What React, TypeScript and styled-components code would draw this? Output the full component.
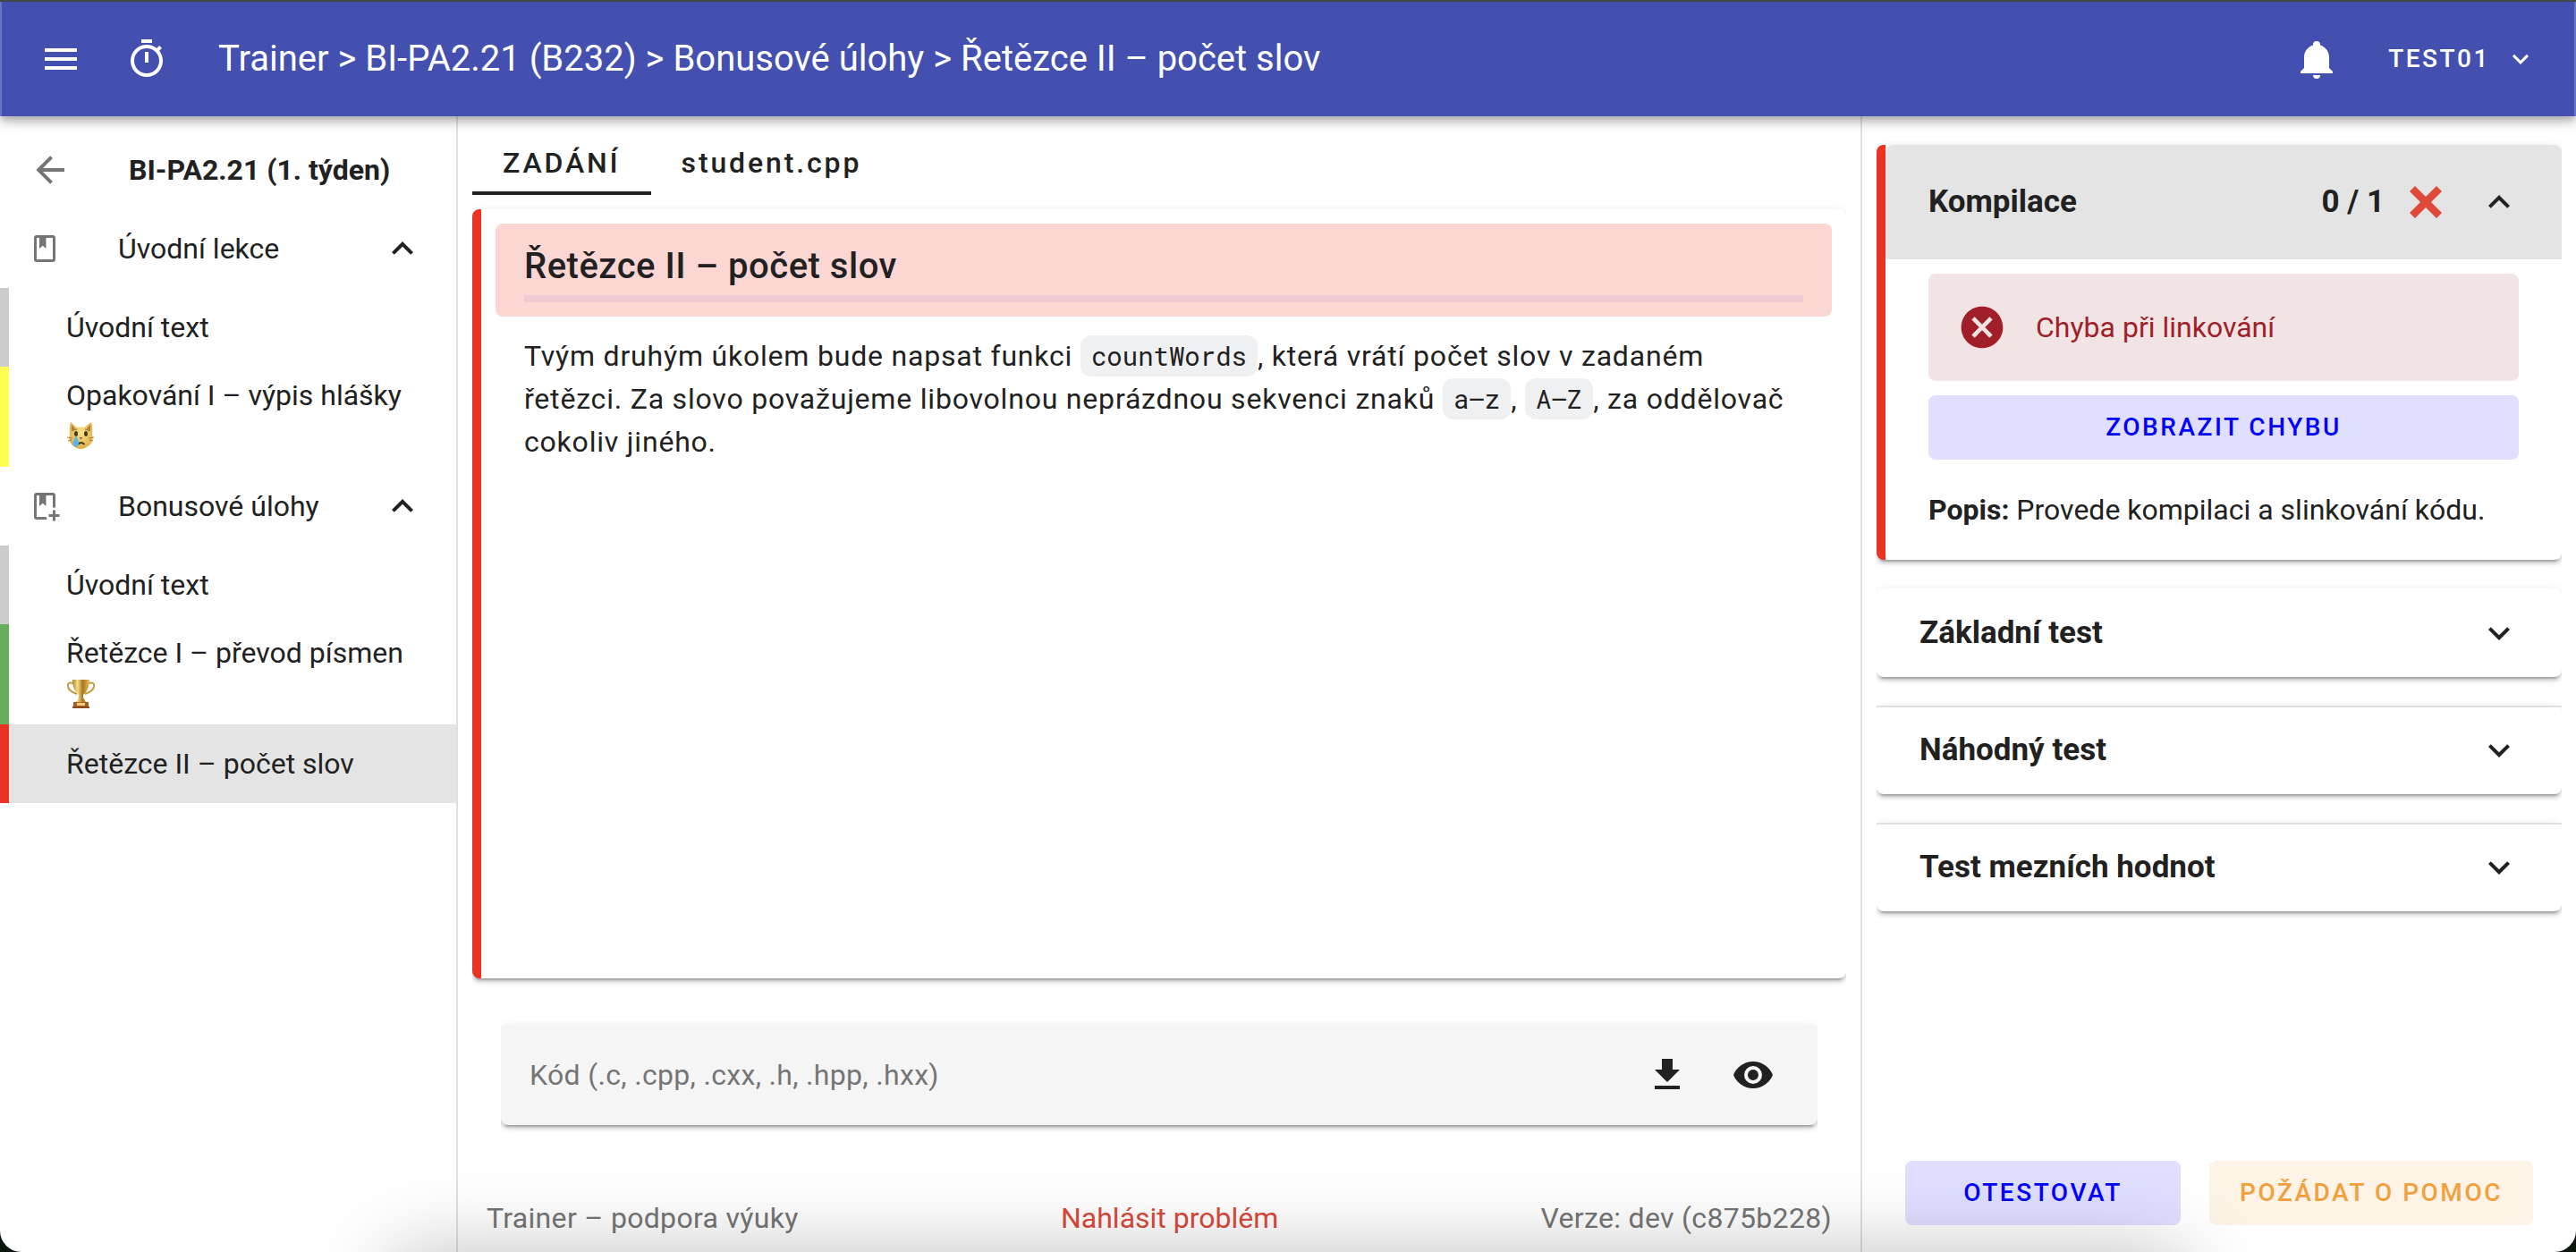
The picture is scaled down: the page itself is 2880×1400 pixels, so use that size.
import React from "react";
import styled, { createGlobalStyle } from "styled-components";

const ink = "#212121";
const muted = "#757575";
const line = "#e0e0e0";
const danger = "#eb3324";
const elevation =
  "0 6px 2px -4px rgba(0,0,0,.2), 0 4px 4px 0 rgba(0,0,0,.14), 0 2px 10px 0 rgba(0,0,0,.12)";

const GlobalStyle = createGlobalStyle`
  *, *::before, *::after { box-sizing: border-box; }
  html, body { margin: 0; background: #0c160d; }
  body {
    font-family: Roboto, "Noto Sans", sans-serif;
    font-size: 32px;
    line-height: 48px;
    color: ${ink};
    -webkit-font-smoothing: antialiased;
  }
  h1, h2, h3, p, ul { margin: 0; padding: 0; font-size: inherit; font-weight: inherit; }
  ul { list-style: none; }
  button { font: inherit; color: inherit; background: none; border: 0; padding: 0; margin: 0; text-align: left; cursor: pointer; }
  a { color: inherit; text-decoration: none; }
  svg { display: block; flex: none; }
`;

const paths = {
  menu: "M3,6H21V8H3V6M3,11H21V13H3V11M3,16H21V18H3V16Z",
  timer:
    "M12,20A7,7 0 0,1 5,13A7,7 0 0,1 12,6A7,7 0 0,1 19,13A7,7 0 0,1 12,20M19.03,7.39L20.45,5.97C20,5.46 19.55,5 19.04,4.56L17.62,6C16.07,4.74 14.12,4 12,4A9,9 0 0,0 3,13A9,9 0 0,0 12,22C17,22 21,17.97 21,13C21,10.88 20.26,8.93 19.03,7.39M11,14H13V8H11M15,1H9V3H15V1Z",
  bell:
    "M21,19V20H3V19L5,17V11C5,7.9 7.03,5.17 10,4.29C10,4.19 10,4.1 10,4A2,2 0 0,1 12,2A2,2 0 0,1 14,4C14,4.1 14,4.19 14,4.29C16.97,5.17 19,7.9 19,11V17L21,19M14,21A2,2 0 0,1 12,23A2,2 0 0,1 10,21H14Z",
  down: "M7.41,8.58L12,13.17L16.59,8.58L18,10L12,16L6,10L7.41,8.58Z",
  up: "M7.41,15.41L12,10.83L16.59,15.41L18,14L12,8L6,14L7.41,15.41Z",
  back: "M20,11V13H8L13.5,18.5L12.08,19.92L4.16,12L12.08,4.08L13.5,5.5L8,11H20Z",
  book:
    "M18,2A2,2 0 0,1 20,4V20A2,2 0 0,1 18,22H6A2,2 0 0,1 4,20V4A2,2 0 0,1 6,2H18M18,4H13V12L10.5,9.75L8,12V4H6V20H18V4Z",
  bookPlus:
    "M13.09,20H6V4H8V12L10.5,9.75L13,12V4H18V13.09C18.33,13.04 18.66,13 19,13C19.34,13 19.67,13.04 20,13.09V4A2,2 0 0,0 18,2H6A2,2 0 0,0 4,4V20A2,2 0 0,0 6,22H13.81C13.46,21.39 13.21,20.72 13.09,20M20,15H18V18H15V20H18V23H20V20H23V18H20V15Z",
  download: "M5,20H19V18H5M19,9H15V3H9V9H5L12,16L19,9Z",
  eye:
    "M12,9A3,3 0 0,0 9,12A3,3 0 0,0 12,15A3,3 0 0,0 15,12A3,3 0 0,0 12,9M12,17A5,5 0 0,1 7,12A5,5 0 0,1 12,7A5,5 0 0,1 17,12A5,5 0 0,1 12,17M12,4.5C7,4.5 2.73,7.61 1,12C2.73,16.39 7,19.5 12,19.5C17,19.5 21.27,16.39 23,12C21.27,7.61 17,4.5 12,4.5Z",
  error:
    "M12,2C17.53,2 22,6.47 22,12C22,17.53 17.53,22 12,22C6.47,22 2,17.53 2,12C2,6.47 6.47,2 12,2M15.59,7L12,10.59L8.41,7L7,8.41L10.59,12L7,15.59L8.41,17L12,13.41L15.59,17L17,15.59L13.41,12L17,8.41L15.59,7Z",
};

const Icon = ({ name, size = 48 }: { name: keyof typeof paths; size?: number }) => (
  <svg width={size} height={size} viewBox="0 0 24 24" fill="currentColor" aria-hidden="true">
    <path d={paths[name]} />
  </svg>
);

const CryingCat = () => (
  <svg width="32" height="32" viewBox="0 0 32 32" role="img" aria-label="Plačící kočka">
    <defs>
      <radialGradient id="fur" cx="50%" cy="40%" r="60%">
        <stop offset="0" stopColor="#fbe58a" />
        <stop offset="1" stopColor="#dcae48" />
      </radialGradient>
    </defs>
    <path d="M5 0 L12 6 Q16 5 20 6 L28 0 Q30 8 29 14 Q31 20 27 25 Q21 30 16.500 30 Q11 30 6 25 Q2 20 4 14 Q3 8 5 0Z" fill="url(#fur)" />
    <path d="M6 3 L10 7 L6 10Z M27 3 L23 7 L27 10Z" fill="#b9783a" />
    <ellipse cx="11" cy="13" rx="2" ry="3" fill="#4b3a1c" />
    <ellipse cx="22" cy="13" rx="2" ry="3" fill="#4b3a1c" />
    <path d="M7 10 Q9 8 12 8 M26 10 Q24 8 21 8" fill="none" stroke="#8a6424" strokeWidth="1" />
    <path d="M14.500 17h4l-2 2.500z" fill="#a05a48" />
    <path d="M13 25 Q16.500 21 20.500 25" fill="none" stroke="#4b3a1c" strokeWidth="2" />
    <path d="M1 17l6 1M2 21l4-1M31 17l-6 1M30 21l-4-1" stroke="#a8803a" strokeWidth="1" />
    <path d="M11 15 Q15 23 13.500 26 Q11 29 8 26 Q6.500 23 11 15Z" fill="#5bb5ee" />
  </svg>
);

const Trophy = () => (
  <svg width="32" height="32" viewBox="0 0 32 32" role="img" aria-label="Pohár">
    <defs>
      <linearGradient id="gold" x1="0" x2="1">
        <stop offset="0" stopColor="#b08020" />
        <stop offset=".3" stopColor="#f7e08c" />
        <stop offset=".6" stopColor="#a9771d" />
        <stop offset="1" stopColor="#e6bd58" />
      </linearGradient>
    </defs>
    <path d="M8 4 Q1 2 2 8 Q3 13 12 16 M25 4 Q32 2 31 8 Q30 13 21 16" fill="none" stroke="#c39a40" strokeWidth="2" />
    <path d="M7 0h19q0 12-7 17v3l3 5h-11l3-5v-3Q7 12 7 0z" fill="url(#gold)" />
    <path d="M8 25h17v5H8z" fill="#a65f26" />
    <path d="M12 26h9v3h-9z" fill="#f0cf7a" />
    <path d="M7 30h19v2H7z" fill="#8a4a1e" />
  </svg>
);

const CrossMark = () => (
  <svg width="36" height="36" viewBox="0 0 36 36" role="img" aria-label="Neúspěch">
    <path d="M6 0L18 12L30 0L36 6L24 18L36 30L30 36L18 24L6 36L0 30L12 18L0 6Z" fill="#e0483a" />
  </svg>
);

const Window = styled.div`
  position: relative;
  display: flex;
  flex-direction: column;
  height: 100vh;
  overflow: hidden;
  border-top: 2px solid #444746;
  border-radius: 0 0 24px 24px;
  background: #fff;
`;

const DockShade = styled.div`
  position: absolute;
  left: 15%;
  right: 15%;
  top: 100%;
  height: 200px;
  border-radius: 40px;
  box-shadow: 0 0 90px rgba(0, 0, 0, 0.25);
  pointer-events: none;
`;

const AppBar = styled.header`
  position: relative;
  z-index: 2;
  display: flex;
  align-items: center;
  flex: none;
  height: 128px;
  padding: 0 42px;
  border: solid #6a73c0;
  border-width: 0 2px;
  background: #4450b0;
  color: #fff;
  box-shadow: 0 4px 8px -2px rgba(0, 0, 0, 0.2), 0 8px 10px rgba(0, 0, 0, 0.14), 0 2px 20px rgba(0, 0, 0, 0.12);
`;

const BarButton = styled.button`
  display: flex;
  align-items: center;
  margin-right: 48px;
`;

const Crumbs = styled.h1`
  flex: 1;
  padding-left: 8px;
  font-size: 40px;
`;

const UserButton = styled.button`
  display: flex;
  align-items: center;
  gap: 16px;
  padding-left: 8px;
  font-size: 28px;
  font-weight: 500;
  letter-spacing: 0.09em;
`;

const Body = styled.div`
  display: flex;
  flex: 1;
  min-height: 0;
`;

const Sidebar = styled.nav`
  flex: none;
  width: 512px;
  padding-top: 16px;
  border-right: 2px solid ${line};
`;

const SideHead = styled.div`
  display: flex;
  align-items: center;
  gap: 64px;
  height: 88px;
  padding-left: 32px;
  font-weight: 700;

  a { color: ${muted}; }
`;

const GroupHead = styled.button`
  display: flex;
  align-items: center;
  width: 100%;
  height: 88px;
  padding: 0 36px 0 32px;

  svg:first-child { color: ${muted}; }
  span { flex: 1; padding-left: 64px; }
`;

const Lesson = styled.a<{ $mark: string; $active?: boolean }>`
  display: flex;
  align-items: center;
  min-height: 88px;
  padding: 8px 32px 8px 64px;
  border-left: 10px solid ${(p) => p.$mark};
  background: ${(p) => (p.$active ? "#e4e4e4" : "transparent")};

  svg { margin: 6px 0 10px; }
`;

const Main = styled.main`
  display: flex;
  flex: 1;
  flex-direction: column;
  min-width: 0;
  padding: 16px 16px 0;
`;

const Tabs = styled.div`
  display: flex;
  margin-bottom: 16px;
`;

const Tab = styled.button<{ $active?: boolean }>`
  height: 72px;
  padding: 4px 34px 0;
  border-bottom: 4px solid ${(p) => (p.$active ? ink : "transparent")};
  font-weight: 500;
  letter-spacing: 0.09em;
`;

const Card = styled.article`
  flex: 1;
  padding: 16px;
  border-left: 10px solid ${danger};
  border-radius: 8px;
  background: #fff;
  box-shadow: ${elevation};
  clip-path: inset(-20px 0);
`;

const TaskTitle = styled.div`
  padding: 24px 32px 16px;
  border-radius: 8px;
  background: #fcd6d3;

  h2 {
    padding-bottom: 8px;
    border-bottom: 8px solid #f0cbd6;
    font-size: 40px;
    font-weight: 500;
    letter-spacing: 0.0125em;
  }
`;

const TaskText = styled.p`
  padding: 20px 32px;
  letter-spacing: 0.025em;

  code {
    padding: 4px 12px;
    border-radius: 12px;
    background: #eff0f2;
    font-family: "Roboto Mono", "DejaVu Sans Mono", monospace;
    font-size: 29px;
    letter-spacing: 0;
  }
`;

const Upload = styled.div`
  display: flex;
  align-items: center;
  height: 112px;
  margin: 52px 32px 72px;
  padding: 0 48px 0 32px;
  border-radius: 8px;
  background: #f5f5f5;
  box-shadow: ${elevation};
  clip-path: inset(-20px 0);

  input {
    flex: 1;
    min-width: 0;
    padding: 0;
    border: 0;
    outline: 0;
    background: none;
    color: ${ink};
    font: inherit;
    letter-spacing: 0.01em;
  }
  input::placeholder { color: ${muted}; opacity: 1; }
  button { margin-left: 48px; }
`;

const Footer = styled.footer`
  display: flex;
  justify-content: space-between;
  height: 70px;
  padding: 8px 16px 0;
  color: ${muted};
  letter-spacing: 0.01em;

  a { color: #d94a3a; letter-spacing: 0; }
`;

const Results = styled.aside`
  display: flex;
  flex: none;
  flex-direction: column;
  width: 800px;
  padding: 32px 16px 30px;
  border-left: 2px solid ${line};
`;

const Panel = styled.section<{ $failed?: boolean }>`
  margin-bottom: 32px;
  border-left: ${(p) => (p.$failed ? `10px solid ${danger}` : "0")};
  border-radius: 8px;
  background: #fff;
  box-shadow: ${elevation};
  clip-path: inset(-20px 0);
`;

const PanelHead = styled.button<{ $open?: boolean; $divided?: boolean }>`
  display: flex;
  align-items: center;
  width: 100%;
  height: ${(p) => (p.$open ? 128 : 99)}px;
  padding: 0 46px 0 48px;
  border: solid transparent;
  border-width: 2px 0;
  border-top-color: ${(p) => (p.$divided ? line : "transparent")};
  border-radius: ${(p) => (p.$divided ? "0" : "8px 8px 0 0")};
  background: ${(p) => (p.$open ? "#e4e4e4" : "none")};
  font-size: 35px;
  font-weight: 700;
`;

const PanelName = styled.span`
  flex: 1;
`;

const Score = styled.span`
  display: flex;
  align-items: center;
  gap: 28px;
  margin-right: 40px;
`;

const PanelBody = styled.div`
  display: grid;
  gap: 16px;
  padding: 16px 48px 32px;

  p { margin-top: 16px; }
`;

const Alert = styled.div`
  display: flex;
  align-items: center;
  gap: 32px;
  height: 120px;
  padding: 0 32px;
  border-radius: 8px;
  background: #f2e4e5;
  color: #a01f29;
`;

const Action = styled.button<{ $tone?: "help"; $grow?: boolean }>`
  flex: ${(p) => (p.$grow ? "1" : "none")};
  height: 72px;
  padding: 0 34px;
  border-radius: 8px;
  background: ${(p) => (p.$tone === "help" ? "#fdf3e7" : "#e0dfff")};
  color: ${(p) => (p.$tone === "help" ? "#f2a03c" : "#0000ff")};
  font-size: 28px;
  font-weight: 500;
  letter-spacing: 0.09em;
  text-align: center;
`;

const Actions = styled.div`
  display: flex;
  gap: 32px;
  margin-top: auto;
  padding: 0 32px;
`;

const grey = "#cccccc";

const groups = [
  {
    title: "Úvodní lekce",
    icon: "book" as const,
    lessons: [
      { text: "Úvodní text", mark: grey },
      { text: "Opakování I – výpis hlášky", mark: "#ffff54", badge: <CryingCat /> },
    ],
  },
  {
    title: "Bonusové úlohy",
    icon: "bookPlus" as const,
    lessons: [
      { text: "Úvodní text", mark: grey },
      { text: "Řetězce I – převod písmen", mark: "#67ad5b", badge: <Trophy /> },
      { text: "Řetězce II – počet slov", mark: danger, active: true },
    ],
  },
];

const closedPanels = ["Základní test", "Náhodný test", "Test mezních hodnot"];

export default function App() {
  return (
    <Window>
      <GlobalStyle />
      <AppBar>
        <BarButton aria-label="Menu"><Icon name="menu" /></BarButton>
        <BarButton aria-label="Časovač"><Icon name="timer" /></BarButton>
        <Crumbs>Trainer &gt; BI-PA2.21 (B232) &gt; Bonusové úlohy &gt; Řetězce II – počet slov</Crumbs>
        <BarButton aria-label="Oznámení"><Icon name="bell" /></BarButton>
        <UserButton>TEST01 <Icon name="down" size={36} /></UserButton>
      </AppBar>
      <Body>
        <Sidebar>
          <SideHead>
            <a href="#zpet" aria-label="Zpět"><Icon name="back" /></a>
            <span>BI-PA2.21 (1. týden)</span>
          </SideHead>
          {groups.map((g) => (
            <section key={g.title}>
              <GroupHead aria-expanded="true">
                <Icon name={g.icon} size={36} />
                <span>{g.title}</span>
                <Icon name="up" />
              </GroupHead>
              <ul>
                {g.lessons.map((l) => (
                  <li key={l.text}>
                    <Lesson href="#lekce" $mark={l.mark} $active={"active" in l}>
                      <span>
                        {l.text}
                        {"badge" in l && l.badge}
                      </span>
                    </Lesson>
                  </li>
                ))}
              </ul>
            </section>
          ))}
        </Sidebar>
        <Main>
          <Tabs role="tablist">
            <Tab role="tab" aria-selected="true" $active>ZADÁNÍ</Tab>
            <Tab role="tab" aria-selected="false">student.cpp</Tab>
          </Tabs>
          <Card>
            <TaskTitle><h2>Řetězce II – počet slov</h2></TaskTitle>
            <TaskText>
              Tvým druhým úkolem bude napsat funkci <code>countWords</code>, která vrátí počet slov v zadaném
              řetězci. Za slovo považujeme libovolnou neprázdnou sekvenci znaků <code>a–z</code>, <code>A–Z</code>, za
              oddělovač cokoliv jiného.
            </TaskText>
          </Card>
          <Upload>
            <input aria-label="Kód" placeholder="Kód (.c, .cpp, .cxx, .h, .hpp, .hxx)" />
            <button aria-label="Stáhnout"><Icon name="download" /></button>
            <button aria-label="Zobrazit"><Icon name="eye" /></button>
          </Upload>
          <Footer>
            <span>Trainer – podpora výuky</span>
            <a href="#problem">Nahlásit problém</a>
            <span>Verze: dev (c875b228)</span>
          </Footer>
        </Main>
        <Results>
          <Panel $failed>
            <PanelHead $open aria-expanded="true">
              <PanelName>Kompilace</PanelName>
              <Score>0 / 1 <CrossMark /></Score>
              <Icon name="up" />
            </PanelHead>
            <PanelBody>
              <Alert role="alert"><Icon name="error" size={56} />Chyba při linkování</Alert>
              <Action>ZOBRAZIT CHYBU</Action>
              <p><strong>Popis:</strong> Provede kompilaci a slinkování kódu.</p>
            </PanelBody>
          </Panel>
          {closedPanels.map((name, i) => (
            <Panel key={name}>
              <PanelHead $divided={i > 0} aria-expanded="false">
                <PanelName>{name}</PanelName>
                <Icon name="down" />
              </PanelHead>
            </Panel>
          ))}
          <Actions>
            <Action $grow>OTESTOVAT</Action>
            <Action $tone="help">POŽÁDAT O POMOC</Action>
          </Actions>
        </Results>
      </Body>
      <DockShade />
    </Window>
  );
}
